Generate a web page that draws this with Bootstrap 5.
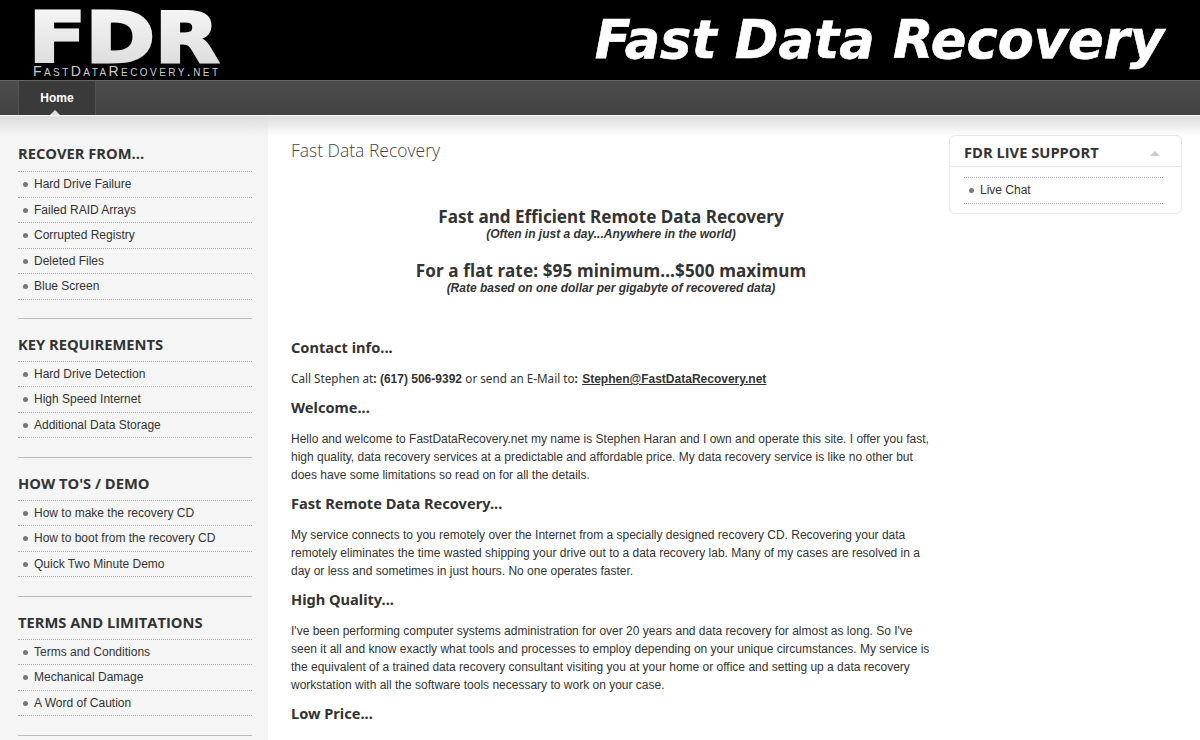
<!DOCTYPE html>
<html lang="en">
<head>
<meta charset="utf-8">
<title>Fast Data Recovery</title>
<link rel="stylesheet" href="https://cdn.jsdelivr.net/npm/bootstrap@5.3.0/dist/css/bootstrap.min.css">
<style>
html,body{height:740px;overflow:hidden;}
body{background:#fff;font-family:"Liberation Sans",Arial,sans-serif;font-size:12px;line-height:18px;color:#333;}
.site-top{height:80px;background:#000;overflow:hidden;}
.logo-box{width:260px;height:80px;}
.logo-sub{font-variant:small-caps;letter-spacing:1px;}
.site-slogan{font-family:"DejaVu Sans",sans-serif;font-weight:700;font-style:italic;font-size:52.6px;line-height:80px;color:#fff;padding-right:36px;margin:0;white-space:nowrap;-webkit-text-stroke:.6px #fff;}
.site-nav{height:36px;background:linear-gradient(#4c4c4c,#424242);border-top:1px solid #666;padding-left:18px;border-bottom:1px solid #fff;}
.nav-home{position:relative;display:block;width:78px;height:34px;background:#3a3a3a;border-left:1px solid #555;border-right:1px solid #555;color:#fff;font-weight:700;font-size:12px;line-height:34px;text-align:center;text-decoration:none;}
.nav-home::after{content:"";position:absolute;left:31px;bottom:0;border:5px solid transparent;border-top:0;border-bottom-color:#ddd;}
.page-body{height:624px;overflow:hidden;}
.side-col{width:268px;flex:none;background:#f5f5f5;padding:0 16px 0 18px;}
.top-shade{position:absolute;left:0;right:0;top:116px;height:20px;z-index:2;background:linear-gradient(#dcdcdc,rgba(255,255,255,0));pointer-events:none;}
.mod-title{font-family:"Open Sans",sans-serif;font-weight:700;font-size:14.7px;line-height:20px;color:#333;margin:0 0 7px;}
.dot-list{list-style:none;margin:0;padding:0;border-top:1px dotted #aaa;}
.dot-list li{height:25.5px;line-height:24px;border-bottom:1px dotted #aaa;padding-left:16px;position:relative;}
.dot-list li::before{content:"";position:absolute;left:5px;top:10px;width:5px;height:5px;border-radius:50%;background:#777;}
.dot-list a{color:#333;text-decoration:none;}
.side-mod{border-bottom:1px solid #bbb;padding:15px 0 18.5px;}
.side-mod:first-child{padding:27px 0 18px;}
.side-mod:first-child .mod-title{margin-bottom:8px;}
.main-col{width:681px;flex:none;padding:22px 18px 0 23px;}
.page-title{font-family:"Open Sans",sans-serif;font-weight:300;font-size:17.5px;line-height:24px;color:#444;margin:0 0 45px;}
.big-line{font-family:"Noto Sans",sans-serif;font-weight:700;font-size:17.1px;line-height:20px;text-align:center;margin:0;color:#333;}
.big-line.wider{letter-spacing:.12px;}
.sub-line{font-weight:700;font-style:italic;text-align:center;line-height:14px;margin:0 0 20px;color:#333;}
.sub-line.last-sub{margin-bottom:43px;}
.body-head{font-family:"Noto Sans",sans-serif;font-weight:700;font-size:14.6px;line-height:18px;color:#333;margin:0 0 14px;}
.body-text{margin:0 0 10px;}
.body-text a{color:#333;font-weight:700;}
.link-pad{padding-left:1px;}
.trebu{font-family:"Noto Sans",sans-serif;font-size:11.7px;line-height:16px;}
.right-col{width:233px;flex:none;padding-top:19px;}
.live-box{border:1px solid #e8e8e8;border-radius:6px;height:79px;padding:0 18px 0 14px;}
.live-head{height:31px;margin:0 -18px 10px -14px;padding:0 18px 0 14px;border-bottom:1px solid #e8e8e8;position:relative;}
.live-head .mod-title{line-height:33px;margin:0;}
.live-head::after{content:"";position:absolute;right:21px;top:15px;border:5px solid transparent;border-top:0;border-bottom-color:#ccc;}
</style>
</head>
<body>
<header class="site-top d-flex justify-content-between align-items-center">
  <div class="logo-box">
    <svg width="260" height="80" viewBox="0 0 260 80" role="img" aria-label="FDR FastDataRecovery.net">
      <defs><linearGradient id="lg" x1="0" y1="0" x2="0" y2="1"><stop offset="0" stop-color="#fafafa"/><stop offset="1" stop-color="#d8d8d8"/></linearGradient></defs>
      <text x="29" y="61.5" font-family="'DejaVu Sans',sans-serif" font-weight="700" font-size="70" fill="url(#lg)" stroke="url(#lg)" stroke-width="3" stroke-linejoin="miter" textLength="190" lengthAdjust="spacingAndGlyphs">FDR</text>
      <text class="logo-sub" x="33" y="76" font-family="'Liberation Sans',sans-serif" font-size="14" fill="#ccc" textLength="186" lengthAdjust="spacing">FastDataRecovery.net</text>
    </svg>
  </div>
  <p class="site-slogan">Fast Data Recovery</p>
</header>
<nav class="site-nav d-flex">
  <a class="nav-home" href="#">Home</a>
</nav>
<div class="top-shade"></div>
<div class="page-body d-flex">
  <aside class="side-col">
    <section class="side-mod">
      <h3 class="mod-title">RECOVER FROM...</h3>
      <ul class="dot-list">
        <li><a href="#">Hard Drive Failure</a></li>
        <li><a href="#">Failed RAID Arrays</a></li>
        <li><a href="#">Corrupted Registry</a></li>
        <li><a href="#">Deleted Files</a></li>
        <li><a href="#">Blue Screen</a></li>
      </ul>
    </section>
    <section class="side-mod">
      <h3 class="mod-title">KEY REQUIREMENTS</h3>
      <ul class="dot-list">
        <li><a href="#">Hard Drive Detection</a></li>
        <li><a href="#">High Speed Internet</a></li>
        <li><a href="#">Additional Data Storage</a></li>
      </ul>
    </section>
    <section class="side-mod">
      <h3 class="mod-title">HOW TO'S / DEMO</h3>
      <ul class="dot-list">
        <li><a href="#">How to make the recovery CD</a></li>
        <li><a href="#">How to boot from the recovery CD</a></li>
        <li><a href="#">Quick Two Minute Demo</a></li>
      </ul>
    </section>
    <section class="side-mod">
      <h3 class="mod-title">TERMS AND LIMITATIONS</h3>
      <ul class="dot-list">
        <li><a href="#">Terms and Conditions</a></li>
        <li><a href="#">Mechanical Damage</a></li>
        <li><a href="#">A Word of Caution</a></li>
      </ul>
    </section>
  </aside>
  <main class="main-col">
    <h1 class="page-title">Fast Data Recovery</h1>
    <h2 class="big-line">Fast and Efficient Remote Data Recovery</h2>
    <p class="sub-line">(Often in just a day...Anywhere in the world)</p>
    <h2 class="big-line wider">For a flat rate: $95 minimum...$500 maximum</h2>
    <p class="sub-line last-sub">(Rate based on one dollar per gigabyte of recovered data)</p>
    <h3 class="body-head">Contact info...</h3>
    <p class="body-text"><span class="trebu">Call Stephen at<b>:</b></span> <b>(617) 506-9392</b> <span class="trebu">or send an E-Mail to<b>:</b></span> <a class="link-pad" href="#">Stephen@FastDataRecovery.net</a></p>
    <h3 class="body-head">Welcome...</h3>
    <p class="body-text">Hello and welcome to FastDataRecovery.net my name is Stephen Haran and I own and operate this site. I offer you fast, high quality, data recovery services at a predictable and affordable price. My data recovery service is like no other but does have some limitations so read on for all the details.</p>
    <h3 class="body-head">Fast Remote Data Recovery...</h3>
    <p class="body-text">My service connects to you remotely over the Internet from a specially designed recovery CD. Recovering your data remotely eliminates the time wasted shipping your drive out to a data recovery lab. Many of my cases are resolved in a day or less and sometimes in just hours. No one operates faster.</p>
    <h3 class="body-head">High Quality...</h3>
    <p class="body-text">I've been performing computer systems administration for over 20 years and data recovery for almost as long. So I've seen it all and know exactly what tools and processes to employ depending on your unique circumstances. My service is the equivalent of a trained data recovery consultant visiting you at your home or office and setting up a data recovery workstation with all the software tools necessary to work on your case.</p>
    <h3 class="body-head">Low Price...</h3>
  </main>
  <aside class="right-col">
    <section class="live-box">
      <div class="live-head"><h3 class="mod-title">FDR LIVE SUPPORT</h3></div>
      <ul class="dot-list"><li><a href="#">Live Chat</a></li></ul>
    </section>
  </aside>
</div>
<script src="https://cdn.jsdelivr.net/npm/bootstrap@5.3.0/dist/js/bootstrap.bundle.min.js"></script>
</body>
</html>
